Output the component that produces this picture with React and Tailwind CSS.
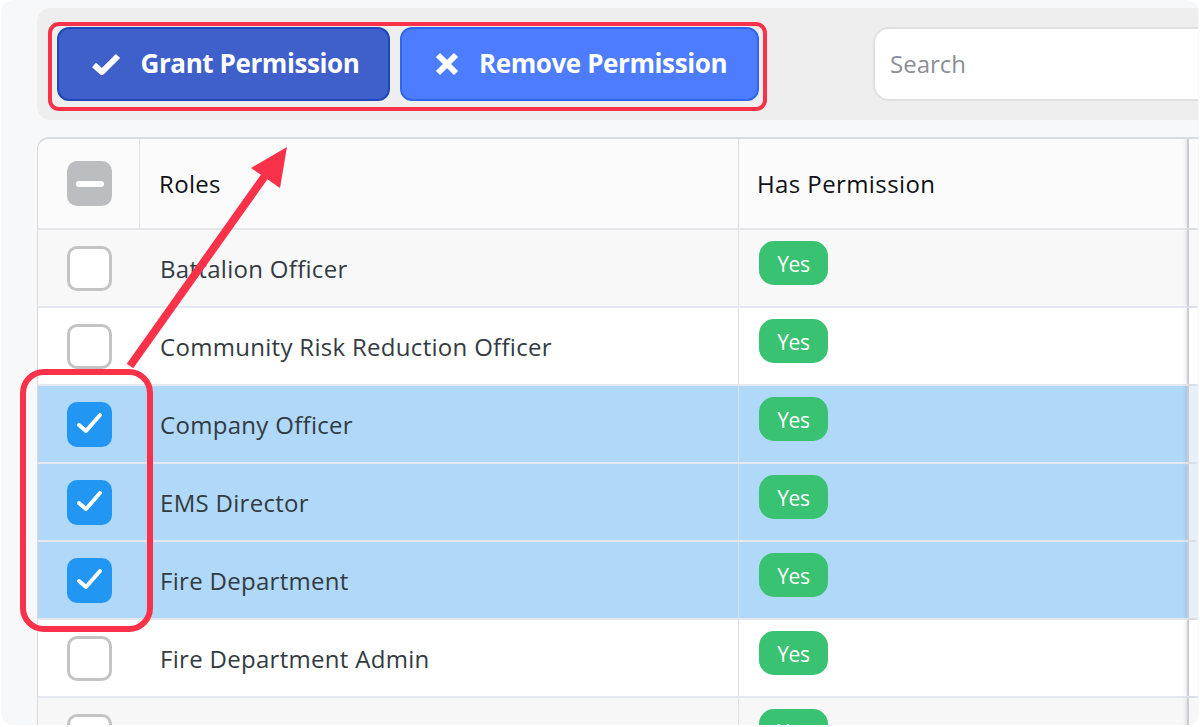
const rows = [
  { name: "Battalion Officer", bg: "bg-[#f8f8f8]", side: "bg-[#f8f8f8]" },
  { name: "Community Risk Reduction Officer", bg: "bg-white", side: "bg-white" },
  { name: "Company Officer", bg: "bg-[#b0d8f9]", side: "bg-[#e9eff8]", checked: true },
  { name: "EMS Director", bg: "bg-[#b0d8f9]", side: "bg-[#e9eff8]", checked: true },
  { name: "Fire Department", bg: "bg-[#b0d8f9]", side: "bg-[#e9eff8]", checked: true },
  { name: "Fire Department Admin", bg: "bg-white", side: "bg-white" },
  { name: "", bg: "bg-[#f7f7f8]", side: "bg-[#f7f7f8]" },
];

function Checkbox({ checked }) {
  if (checked) {
    return (
      <div className="w-[45px] h-[45px] rounded-[10px] bg-[#2196f3] flex items-center justify-center">
        <svg width="30" height="30" viewBox="0 0 30 30" fill="none">
          <path d="M4 16l7 6L25 6" stroke="#fff" strokeWidth="4" strokeLinecap="round" strokeLinejoin="round" />
        </svg>
      </div>
    );
  }
  return <div className="w-[45px] h-[45px] rounded-[10px] bg-white border-[3px] border-[#c4c4c4]" />;
}

function Row({ row }) {
  return (
    <div className={`grid grid-cols-[101px_599px_449px_1fr] h-[78px] border-b-2 border-[#e4e7ee] ${row.bg}`}>
      <div className="flex items-center justify-center pl-[2px]">
        <Checkbox checked={row.checked} />
      </div>
      <div className="flex items-center pl-[21px] pt-[2px] text-[24px] tracking-[0.3px] text-[#333b42]">{row.name}</div>
      <div className="border-l border-[#dcdfe4] pl-[20px] pt-[11px]">
        <div className="w-[69px] h-[44px] rounded-[15px] bg-[#38c272] text-white text-[21px] font-medium tracking-[-0.3px] flex items-center justify-center pt-[4px]">
          Yes
        </div>
      </div>
      <div className={`border-l-2 border-[#c9ccd3] shadow-[-2px_0_3px_rgba(0,0,0,0.08)] ${row.side}`} />
    </div>
  );
}

export default function App() {
  return (
    <div className="relative w-[1200px] h-[727px] overflow-hidden bg-white font-['Open_Sans','Noto_Sans',sans-serif]">
      <div className="h-[725px] mx-[1px] rounded-[12px] bg-[#f7f8fa] pl-[36px] pr-[1px] pt-[8px] overflow-hidden">
        <div className="h-[112px] rounded-l-[14px] bg-[#eeeeee] flex items-start pt-[19px] pl-[20px]">
          <button className="w-[333px] h-[74px] rounded-[12px] bg-[#3f60cb] border-2 border-[#2148b8] text-white text-[26px] font-bold tracking-[-0.4px] flex items-center justify-center gap-[20px] pl-[3px] pb-[1px]">
            <svg width="30" height="24" viewBox="0 0 30 24" fill="none">
              <path d="M3 13l8 7L27 4" stroke="#fff" strokeWidth="6" strokeLinejoin="round" />
            </svg>
            Grant Permission
          </button>
          <button className="ml-[10px] w-[359px] h-[74px] rounded-[12px] bg-[#4d7cff] border-2 border-[#2e66f0] text-white text-[26px] font-bold tracking-[-0.4px] flex items-center justify-center gap-[20px] pl-[3px] pb-[1px]">
            <svg width="24" height="24" viewBox="0 0 24 24" fill="none">
              <path d="M3 3l18 18M21 3L3 21" stroke="#fff" strokeWidth="6" />
            </svg>
            Remove Permission
          </button>
          <div className="ml-[114px] flex-1 h-[74px] rounded-l-[16px] bg-white border-2 border-r-0 border-[#e0e0e0] flex items-center pl-[15px] text-[24px] text-[#8a8f96]">
            Search
          </div>
        </div>
        <div className="mt-[17px] rounded-tl-[12px] border-l border-t-2 border-[#d8dbe0] overflow-hidden">
          <div className="grid grid-cols-[101px_599px_449px_1fr] h-[91px] bg-[#fbfbfb] border-b-2 border-[#e4e6e9]">
            <div className="flex items-center justify-center pl-[2px]">
              <div className="w-[45px] h-[45px] rounded-[10px] bg-[#bcbdc0] flex items-center justify-center">
                <div className="w-[28px] h-[6px] rounded-full bg-white" />
              </div>
            </div>
            <div className="border-l border-[#e2e2e2] flex items-center pl-[19px] text-[24px] tracking-[0.33px] font-medium text-[#0f1116]">Roles</div>
            <div className="border-l border-[#dcdfe4] flex items-center pl-[18px] text-[24px] tracking-[0.4px] font-medium text-[#0f1116]">Has Permission</div>
            <div className="border-l-2 border-[#c9ccd3] shadow-[-2px_0_3px_rgba(0,0,0,0.08)]" />
          </div>
          {rows.map((row, i) => (
            <Row key={i} row={row} />
          ))}
        </div>
      </div>

      <div className="absolute left-[48px] top-[22px] w-[719px] h-[89px] rounded-[11px] border-4 border-[#f9324a] pointer-events-none" />
      <div className="absolute left-[20px] top-[369px] w-[133px] h-[263px] rounded-[24px] border-[6px] border-[#f9324a] pointer-events-none" />
      <svg className="absolute left-0 top-0 pointer-events-none" width="1200" height="727" fill="none">
        <path d="M130 366L267 173" stroke="#f9324a" strokeWidth="8" />
        <path d="M287 147L251 168L280 188Z" fill="#f9324a" />
      </svg>
    </div>
  );
}
